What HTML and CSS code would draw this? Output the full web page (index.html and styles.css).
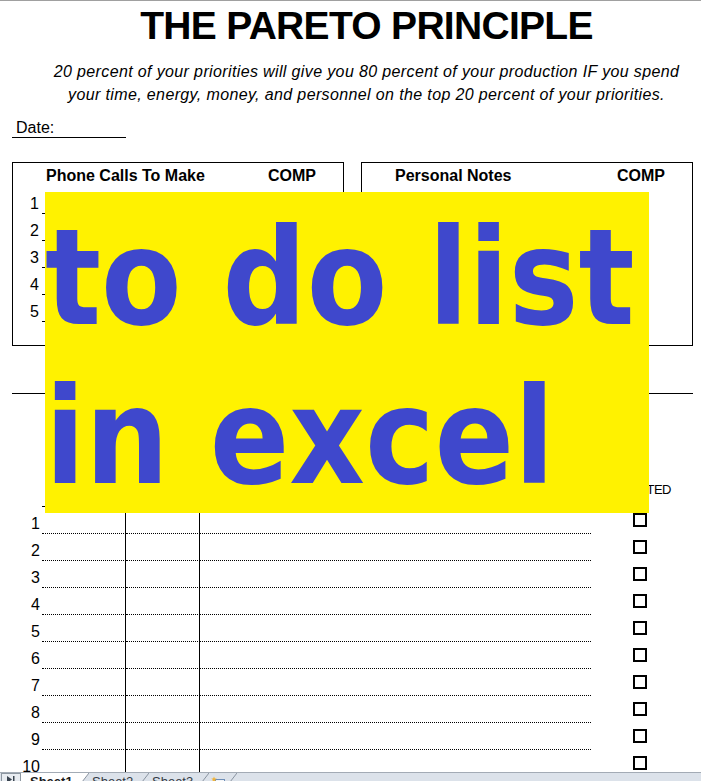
FILE: index.html
```html
<!DOCTYPE html>
<html lang="en">
<head>
<meta charset="utf-8">
<title>The Pareto Principle - to do list in excel</title>
<link rel="stylesheet" href="styles.css">
</head>
<body>
<div class="page">
  <header class="head">
    <h1 class="title">THE PARETO PRINCIPLE</h1>
    <p class="quote">20 percent of your priorities will give you 80 percent of your production IF you spend<br>your time, energy, money, and personnel on the top 20 percent of your priorities.</p>
  </header>

  <div class="date">Date:</div>

  <div class="boxes">
    <section class="box">
      <div class="box-head"><span class="bh-title">Phone Calls To Make</span><span class="bh-comp">COMP</span></div>
      <div class="box-row"><span class="num">1</span><span class="line"></span></div>
      <div class="box-row"><span class="num">2</span><span class="line"></span></div>
      <div class="box-row"><span class="num">3</span><span class="line"></span></div>
      <div class="box-row"><span class="num">4</span><span class="line"></span></div>
      <div class="box-row"><span class="num">5</span><span class="line"></span></div>
    </section>
    <section class="box">
      <div class="box-head"><span class="bh-title">Personal Notes</span><span class="bh-comp">COMP</span></div>
    </section>
  </div>

  <div class="rule"></div>

  <div class="tasks">
    <div class="t-head">
      <span class="num"></span><span class="c ca"></span><span class="c cb"></span><span class="c cc"></span>
      <span class="done-label">COMPLETED</span>
    </div>
    <div class="t-row"><span class="num">1</span><span class="c ca"></span><span class="c cb"></span><span class="c cc"></span><span class="done"><span class="chk"></span></span></div>
    <div class="t-row"><span class="num">2</span><span class="c ca"></span><span class="c cb"></span><span class="c cc"></span><span class="done"><span class="chk"></span></span></div>
    <div class="t-row"><span class="num">3</span><span class="c ca"></span><span class="c cb"></span><span class="c cc"></span><span class="done"><span class="chk"></span></span></div>
    <div class="t-row"><span class="num">4</span><span class="c ca"></span><span class="c cb"></span><span class="c cc"></span><span class="done"><span class="chk"></span></span></div>
    <div class="t-row"><span class="num">5</span><span class="c ca"></span><span class="c cb"></span><span class="c cc"></span><span class="done"><span class="chk"></span></span></div>
    <div class="t-row"><span class="num">6</span><span class="c ca"></span><span class="c cb"></span><span class="c cc"></span><span class="done"><span class="chk"></span></span></div>
    <div class="t-row"><span class="num">7</span><span class="c ca"></span><span class="c cb"></span><span class="c cc"></span><span class="done"><span class="chk"></span></span></div>
    <div class="t-row"><span class="num">8</span><span class="c ca"></span><span class="c cb"></span><span class="c cc"></span><span class="done"><span class="chk"></span></span></div>
    <div class="t-row"><span class="num">9</span><span class="c ca"></span><span class="c cb"></span><span class="c cc"></span><span class="done"><span class="chk"></span></span></div>
    <div class="t-row"><span class="num">10</span><span class="c ca"></span><span class="c cb"></span><span class="c cc"></span><span class="done"><span class="chk"></span></span></div>
  </div>

  <div class="banner">
    <div class="banner-line">to do list</div>
    <div class="banner-line">in excel</div>
  </div>
</div>

<div class="tabs">
  <span class="nav"><svg width="10" height="8" viewBox="0 0 10 8"><path d="M1 1 L6 4.5 L1 8 Z" fill="#3a4450"/><rect x="7" y="1" width="1.5" height="7" fill="#3a4450"/></svg></span>
  <span class="tab tab-active">Sheet1</span>
  <svg class="sep" width="7" height="9" viewBox="0 0 7 9"><polygon points="0,0 7,0 0,9" fill="#ffffff"/><line x1="0" y1="9" x2="7" y2="0" stroke="#8a94a0" stroke-width="1"/></svg>
  <span class="tab">Sheet2</span>
  <svg class="sep" width="7" height="9" viewBox="0 0 7 9"><line x1="0" y1="9" x2="7" y2="0" stroke="#8a94a0" stroke-width="1"/></svg>
  <span class="tab">Sheet3</span>
  <svg class="sep" width="7" height="9" viewBox="0 0 7 9"><line x1="0" y1="9" x2="7" y2="0" stroke="#8a94a0" stroke-width="1"/></svg>
  <span class="tab-icon"><svg width="16" height="9" viewBox="0 0 16 9"><rect x="5.5" y="3.5" width="9" height="8" fill="#f4f6f9" stroke="#6f8fb8" stroke-width="1"/><path d="M4 0.5 L4.8 2.4 L6.8 2.6 L5.2 3.8 L5.7 5.8 L4 4.7 L2.3 5.8 L2.8 3.8 L1.2 2.6 L3.2 2.4 Z" fill="#f2b233"/></svg></span>
  <svg class="sep" width="7" height="9" viewBox="0 0 7 9"><line x1="0" y1="9" x2="7" y2="0" stroke="#8a94a0" stroke-width="1"/></svg>
</div>
</body>
</html>
```

FILE: styles.css
```css
body {
  margin: 0;
  background: #ffffff;
  color: #000000;
  font-family: "Liberation Sans", Arial, sans-serif;
}

.page {
  position: relative;
  width: 701px;
  height: 772px;
  box-sizing: border-box;
  border-top: 1px solid #a0a0a0;
  overflow: hidden;
}

/* ---------- heading ---------- */
.head {
  padding-left: 32px;
  text-align: center;
}

.title {
  margin: 0;
  padding-top: 3px;
  font-size: 39px;
  line-height: 44px;
  font-weight: bold;
  letter-spacing: -0.7px;
}

.quote {
  margin: 12px 0 0;
  font-size: 16px;
  line-height: 23px;
  font-style: italic;
  letter-spacing: 0.37px;
}

.date {
  margin: 13px 0 0 12px;
  width: 110px;
  padding-left: 4px;
  border-bottom: 1px solid #000;
  font-size: 16px;
  line-height: 18px;
}

/* ---------- top boxes ---------- */
.boxes {
  display: flex;
  gap: 17px;
  margin: 24px 0 0 12px;
}

.box {
  width: 332px;
  height: 184px;
  box-sizing: border-box;
  border: 1px solid #000;
}

.box-head {
  display: flex;
  height: 24px;
  box-sizing: border-box;
  padding: 2px 0 0 33px;
  font-size: 16px;
  line-height: 22px;
  font-weight: bold;
}

.bh-title {
  width: 222px;
}

.box-row {
  display: flex;
  height: 27px;
}

.box-row .num {
  align-self: flex-end;
  width: 26px;
  margin-bottom: 1px;
  text-align: right;
  font-size: 16px;
  line-height: 18px;
}

.box-row .line {
  flex: 1;
  margin: 0 20px 0 3px;
  border-bottom: 1px solid #000;
}

.rule {
  margin: 47px 8px 0 12px;
  border-top: 1px solid #000;
}

/* ---------- task table ---------- */
.tasks .num {
  width: 40px;
  flex: none;
}

.t-head,
.t-row {
  display: flex;
}

.t-head {
  height: 113px;
}

.t-row {
  height: 27px;
}

.c {
  box-sizing: border-box;
  flex: none;
}

.ca {
  width: 84px;
  margin-left: 2px;
  border-right: 1px solid #000;
}

.cb {
  width: 74px;
  border-right: 1px solid #000;
}

.cc {
  width: 391px;
}

.t-head .c {
  border-bottom: 1px solid #000;
}

.t-row .c {
  border-bottom: 1px dotted #000;
}

.t-row .num {
  align-self: flex-end;
  margin-bottom: 1px;
  text-align: right;
  font-size: 16px;
  line-height: 18px;
}

.done-label {
  flex: 1;
  align-self: flex-end;
  padding: 0 30px 10px 0;
  text-align: right;
  font-size: 13px;
  line-height: 15px;
  letter-spacing: -0.5px;
}

.done {
  flex: 1;
  padding: 6px 0 0 42px;
}

.chk {
  display: block;
  width: 14px;
  height: 14px;
  box-sizing: border-box;
  border: 2px solid #000;
}

/* ---------- overlay banner ---------- */
.banner {
  position: absolute;
  left: 45px;
  top: 191px;
  width: 604px;
  height: 321px;
  box-sizing: border-box;
  padding-top: 7px;
  overflow: hidden;
  background: #fff200;
  color: #3f48cc;
  font-family: "DejaVu Sans", Verdana, sans-serif;
  font-weight: bold;
  font-size: 134px;
  line-height: 159px;
  white-space: nowrap;
}

.banner-line {
  transform: scaleX(0.876);
  transform-origin: 0 0;
}

/* ---------- sheet tabs ---------- */
.tabs {
  display: flex;
  height: 9px;
  box-sizing: border-box;
  overflow: hidden;
  border-top: 1px solid #a3abb5;
  background: #dce2ea;
  font-size: 13px;
  line-height: 16px;
  color: #333a44;
}

.nav {
  display: flex;
  justify-content: center;
  width: 20px;
  margin-left: 1px;
  box-sizing: border-box;
  padding-top: 1px;
  border: 1px solid #8c96a0;
  border-bottom: none;
  background: #e8ecf1;
}

.tab {
  width: 53px;
  box-sizing: border-box;
  padding: 1px 0 0 3px;
}

.tab-active {
  width: 61px;
  padding-left: 9px;
  background: #ffffff;
  font-weight: bold;
  color: #1a1a1a;
}

.sep {
  display: block;
  flex: none;
}

.tab-icon {
  width: 21px;
  padding-left: 1px;
  box-sizing: border-box;
}
```
